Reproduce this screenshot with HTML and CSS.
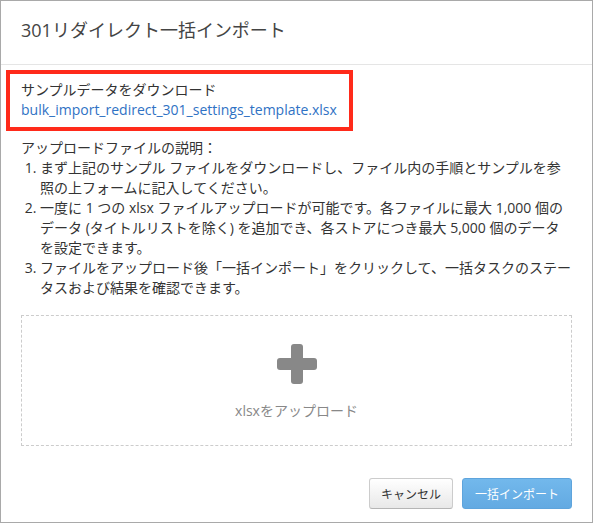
FILE: index.html
```html
<!DOCTYPE html>
<html lang="ja">
<head>
    <meta charset="UTF-8">
    <meta name="viewport" content="width=device-width, initial-scale=1.0">
    <title>301リダイレクト一括インポート</title>
    <link rel="stylesheet" href="styles.css">
</head>
<body>
    <div class="modal">
        <div class="modal-header">
            <h3>301リダイレクト一括インポート</h3>
        </div>

        <div class="modal-body">
            <div class="sample">
                <div>サンプルデータをダウンロード</div>
                <a href="#">bulk_import_redirect_301_settings_template.xlsx</a>
                <span class="highlight"></span>
            </div>

            <div class="guide">
                <p>アップロードファイルの説明：</p>
                <ol>
                    <li>まず上記のサンプル ファイルをダウンロードし、ファイル内の手順とサンプルを参照の上フォームに記入してください。</li>
                    <li>一度に 1 つの xlsx ファイルアップロードが可能です。各ファイルに最大 1,000 個のデータ (タイトルリストを除く) を追加でき、各ストアにつき最大 5,000 個のデータを設定できます。</li>
                    <li>ファイルをアップロード後「一括インポート」をクリックして、一括タスクのステータスおよび結果を確認できます。</li>
                </ol>
            </div>

            <div class="dropzone">
                <svg class="plus" width="40" height="40" viewBox="0 0 40 40">
                    <rect x="14" y="0" width="12" height="40" rx="3"/>
                    <rect x="0" y="14" width="40" height="12" rx="3"/>
                </svg>
                <span>xlsxをアップロード</span>
            </div>
        </div>

        <div class="modal-footer">
            <button class="btn">キャンセル</button>
            <button class="btn btn-primary">一括インポート</button>
        </div>
    </div>
</body>
</html>
```

FILE: styles.css
```css
* {
    margin: 0;
    padding: 0;
    box-sizing: border-box;
}

body {
    font-family: "Open Sans", "Noto Sans CJK JP", sans-serif;
    font-size: 14px;
    line-height: 20px;
    color: #333;
    background: #fff;
}

.modal {
    width: 593px;
    height: 523px;
    border: 1px solid #a9a9a9;
    display: flex;
    flex-direction: column;
}

.modal-header {
    height: 64px;
    padding: 17px 20px 0;
    border-bottom: 1px solid #e5e5e5;
}

.modal-header h3 {
    font-size: 18px;
    font-weight: normal;
    line-height: 24px;
    color: #444;
}

.modal-body {
    padding: 15px 20px 0;
}

.sample {
    position: relative;
}

.sample a {
    color: #2f72c4;
    text-decoration: none;
}

/* annotation frame */
.highlight {
    position: absolute;
    left: -15px;
    top: -10px;
    width: 347px;
    height: 61px;
    border: 4px solid #ff2a1a;
}

.guide {
    margin-top: 18px;
}

.guide ol {
    padding-left: 19px;
}

.dropzone {
    margin-top: 17px;
    height: 131px;
    border: 1px dashed #ccc;
    display: flex;
    flex-direction: column;
    align-items: center;
    padding-top: 28px;
    gap: 17px;
    color: #888;
}

.plus {
    fill: #888;
}

.modal-footer {
    margin-top: auto;
    padding: 0 20px 13px;
    display: flex;
    justify-content: flex-end;
    gap: 9px;
}

.btn {
    height: 31px;
    padding: 0 11px;
    font-family: inherit;
    font-size: 12px;
    color: #333;
    background: linear-gradient(#fff, #e8e8e8);
    border: 1px solid #ccc;
    border-bottom-color: #b5b5b5;
    border-radius: 3px;
    cursor: pointer;
}

.btn-primary {
    width: 110px;
    color: #fff;
    background: linear-gradient(#72b8ec, #63aae2);
    border-color: #5ea4dc;
}
```
